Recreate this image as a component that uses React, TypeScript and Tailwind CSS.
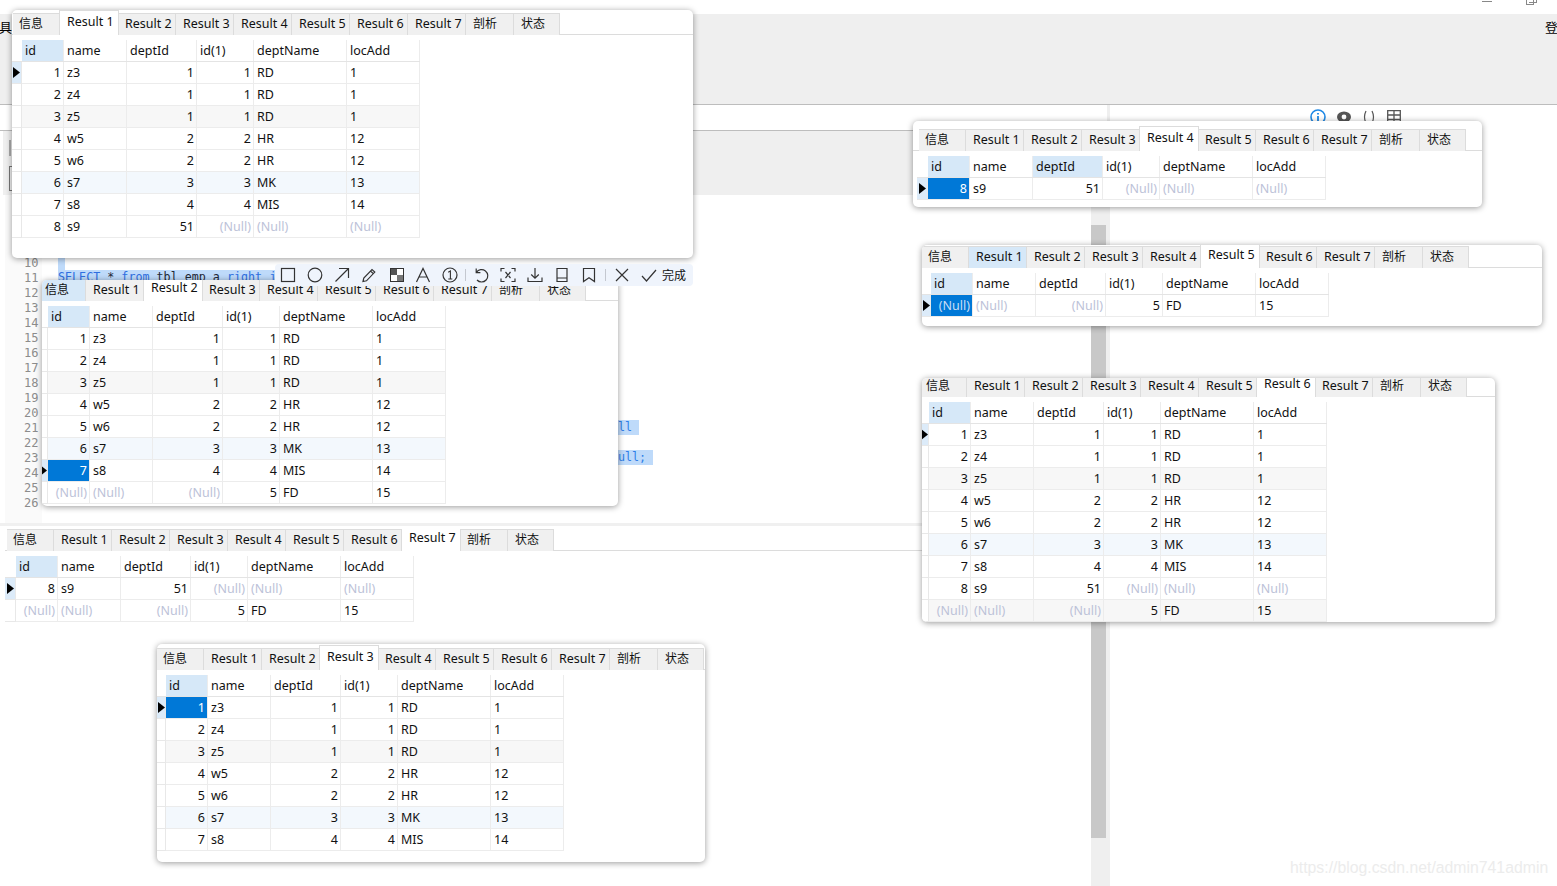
import React from 'react'

type Row = string[]

const NULL = '(Null)'
const base: Row[] = [
  ['1', 'z3', '1', '1', 'RD', '1'],
  ['2', 'z4', '1', '1', 'RD', '1'],
  ['3', 'z5', '1', '1', 'RD', '1'],
  ['4', 'w5', '2', '2', 'HR', '12'],
  ['5', 'w6', '2', '2', 'HR', '12'],
  ['6', 's7', '3', '3', 'MK', '13'],
  ['7', 's8', '4', '4', 'MIS', '14'],
]
const s9: Row = ['8', 's9', '51', NULL, NULL, NULL]
const fd: Row = [NULL, NULL, NULL, '5', 'FD', '15']

const COLS = ['id', 'name', 'deptId', 'id(1)', 'deptName', 'locAdd']
const COL_W = ['w-[42px]', 'w-[63px]', 'w-[70px]', 'w-[57px]', 'w-[93px]', 'w-[73px]']
const RIGHT = [true, false, true, true, false, false]
const TABS = ['Result 1', 'Result 2', 'Result 3', 'Result 4', 'Result 5', 'Result 6', 'Result 7']

interface PanelProps {
  box: string
  tabPad: string
  gridPad: string
  indW: string
  active: number
  rows: Row[]
  selected?: number
  markerRow?: number
  hoverTab?: string
  hoverHead?: number
  flat?: boolean
}

const Arrow = () => (
  <svg width="7" height="11" viewBox="0 0 7 11">
    <polygon points="0,0 7,5.5 0,11" fill="#000" />
  </svg>
)

const Tab = ({ label, w, active, hover, cjk, first }: { label: string; w: string; active?: boolean; hover?: boolean; cjk?: boolean; first?: boolean }) => {
  if (active) {
    return (
      <div className="relative z-10 -mx-px -mt-[3px] h-[25px] w-[60px] shrink-0 border-x border-t border-[#dcdcdc] bg-white pl-[7px] leading-[21px] text-[#111]">
        {label}
      </div>
    )
  }
  return (
    <div className={`${w} h-[22px] shrink-0 border-t border-r border-[#dcdcdc] leading-[20px] ${first ? 'pl-[6px]' : 'pl-[7px]'} ${cjk ? 'text-[12px]' : ''} ${hover ? 'bg-[#d6e8f8]' : 'bg-[#f0f0f0]'}`}>
      {label}
    </div>
  )
}

const Panel = ({ box, tabPad, gridPad, indW, active, rows, selected, markerRow = 0, hoverTab, hoverHead, flat }: PanelProps) => (
  <div className={`${box} absolute z-10 overflow-hidden bg-white text-[12.5px] text-[#111] ${flat ? '' : 'rounded-[5px] shadow-[0_1px_6px_rgba(0,0,0,0.4)]'}`}>
    <div className={`${tabPad} flex h-[22px] border-b border-[#dcdcdc]`}>
      <Tab label="信息" w="w-[47px]" hover={hoverTab === '信息'} cjk first />
      {TABS.map((t, i) => (
        <Tab key={t} label={t} w="w-[58px]" active={i === active} hover={hoverTab === t} />
      ))}
      <Tab label="剖析" w="w-[48px]" cjk />
      <Tab label="状态" w="w-[46px]" cjk />
    </div>
    <div className={`${gridPad} mt-[5px] w-fit`}>
      <div className="flex h-[22px] border-b border-[#e4e4e4] leading-[22px]">
        <div className={`${indW} shrink-0`} />
        {COLS.map((c, i) => (
          <div key={c} className={`${COL_W[i]} shrink-0 border-r border-[#ececec] pl-[3px] ${i === 0 || i === hoverHead ? 'bg-[#d6e8f8]' : ''}`}>{c}</div>
        ))}
      </div>
      {rows.map((r, ri) => {
        const nth = ri + 1
        const tint = nth % 6 === 0 ? 'bg-[#f3f8fd]' : nth % 3 === 0 ? 'bg-[#f7f7f7]' : 'bg-white'
        return (
          <div key={ri} className="flex h-[22px] leading-[21px]">
            <div className={`${indW} flex shrink-0 items-center justify-center border-r border-b border-[#e8e8e8] ${ri === markerRow ? 'bg-[#dcebf9]' : 'bg-white'}`}>
              {ri === markerRow && <Arrow />}
            </div>
            {r.map((v, i) => {
              const sel = selected === ri && i === 0
              const isNull = v === NULL
              return (
                <div
                  key={i}
                  className={`${COL_W[i]} shrink-0 border-r border-b border-[#ececec] ${RIGHT[i] ? 'pr-[2px] text-right' : 'pl-[3px]'} ${sel ? 'bg-[#0078d7]' : tint} ${sel ? (isNull ? 'text-[#c9def5]' : 'text-white') : isNull ? 'text-[#bcc2d8]' : ''}`}
                >
                  {v}
                </div>
              )
            })}
          </div>
        )
      })}
    </div>
  </div>
)

const Tool = ({ w, children }: { w: string; children: React.ReactNode }) => (
  <svg className={`${w} h-[16px] shrink-0`} viewBox="0 0 16 16" fill="none" stroke="#333" strokeWidth="1.2">
    {children}
  </svg>
)

const Toolbar = () => (
  <div className="absolute left-[275px] top-[264px] z-20 flex h-[22px] w-[418px] items-center rounded-[4px] bg-[#eff4fc] pl-[5px] text-[13px] text-[#111] [font-family:'Noto_Sans_CJK_SC',sans-serif]">
    <div className="flex items-center gap-[11px]">
      <Tool w="w-[16px]"><rect x="1.5" y="1.5" width="13" height="13" /></Tool>
      <Tool w="w-[16px]"><circle cx="8" cy="8" r="6.8" /></Tool>
      <Tool w="w-[16px]"><path d="M1.5 14.5 14.5 1.5M5 1.5h9.5V11" /></Tool>
      <Tool w="w-[16px]"><path d="M2 14.5 2.8 11 11 2.5l2.8 2.6L5.5 13.8ZM9.5 4l2.8 2.6" /></Tool>
      <svg className="ml-[2px] h-[14px] w-[14px] shrink-0" viewBox="0 0 14 14">
        <rect x="0.5" y="0.5" width="13" height="13" fill="#fff" stroke="#333" />
        <rect x="1" y="1" width="6" height="6" fill="#555" />
        <rect x="7" y="7" width="6" height="6" fill="#777" />
      </svg>
      <Tool w="w-[16px]"><path d="M1.5 15 8 1.5 14.5 15M4 10h8" /></Tool>
      <svg className="h-[16px] w-[16px] shrink-0" viewBox="0 0 16 16">
        <circle cx="8" cy="8" r="7" fill="none" stroke="#333" strokeWidth="1.2" />
        <path d="M6.2 5.2 8.4 4v8M6.3 12h4" fill="none" stroke="#333" strokeWidth="1.1" />
      </svg>
    </div>
    <div className="ml-[7px] h-[12px] w-px bg-[#c4c8d0]" />
    <div className="ml-[7px] flex items-center gap-[11px]">
      <Tool w="w-[16px]"><path d="M3.2 1.5v4.2h4.2M3.4 5.4A6.2 6.2 0 1 1 4 13" /></Tool>
      <Tool w="w-[16px]"><path d="M1 4.5V1.5h3.5M11.5 1.5H15v3M15 11.5v3h-3.5M4.5 14.5H1v-3M5.5 5l5 6M10.5 5l-5 6" /></Tool>
      <Tool w="w-[16px]"><path d="M8 1v10M4.2 7.5 8 11.2l3.8-3.7M1 10.5v4h14v-4" /></Tool>
      <Tool w="w-[16px]"><path d="M3 1.5h10v13H3ZM3 11h10" /></Tool>
      <Tool w="w-[16px]"><path d="M2.5 1.5h11v13L8 10.8l-5.5 3.7Z" /></Tool>
    </div>
    <div className="ml-[8px] h-[12px] w-px bg-[#c4c8d0]" />
    <div className="ml-[8px] flex items-center gap-[11px]">
      <Tool w="w-[16px]"><path d="M2 2l12 12M14 2 2 14" /></Tool>
      <Tool w="w-[16px]"><path d="M1 9l4.5 5L15 3" /></Tool>
    </div>
    <span className="ml-[5px] text-[12px]">完成</span>
  </div>
)

const LINE_NOS = ['10', '11', '12', '13', '14', '15', '16', '17', '18', '19', '20', '21', '22', '23', '24', '25', '26']

export default function App() {
  return (
    <div className="relative h-[886px] w-[1557px] overflow-hidden bg-white [font-family:'Noto_Sans','Noto_Sans_CJK_SC',sans-serif]">
      {/* window behind the snippets */}
      <div className="relative h-[14px] bg-white">
        <div className="absolute left-[1482px] top-[1px] h-px w-[10px] bg-[#888]" />
        <div className="absolute left-[1526px] top-0 h-[5px] w-[8px] border-x border-b border-[#888]" />
        <div className="absolute left-[1529px] top-0 h-[3px] w-[8px] border-r border-b border-[#888]" />
      </div>
      <div className="flex h-[91px] items-start justify-between overflow-hidden border-b border-[#bdbdbd] bg-[#efefef] pt-[3px] text-[13px] text-black [font-family:'Noto_Sans_CJK_SC',sans-serif]">
        <span className="-ml-[1px]">具</span>
        <span className="-mr-[1px]">登</span>
      </div>

      <div className="flex h-[781px]">
        <div className="flex h-full w-[1107px] shrink-0 flex-col">
          <div className="h-[26px] border-b border-[#bdbdbd]" />
          <div className="relative ml-[3px] h-[64px] shrink-0 bg-[#efefef]">
            <div className="absolute left-[6px] top-[9px] h-[16px] w-[2px] bg-[#aaa]" />
            <div className="absolute left-[6px] top-[35px] h-[25px] w-[4px] border border-[#777]" />
          </div>
          <div className="flex grow">
            <div className="w-[1091px] shrink-0">
              <div className="relative h-[328px]">
                <div className="absolute left-[5px] top-0 h-full w-[37px] bg-[#fafafa]" />
                <div className="absolute left-[24px] top-[61px] flex flex-col text-[12px] leading-[15px] text-[#8c8c8c] [font-family:'DejaVu_Sans_Mono',monospace]">
                  {LINE_NOS.map((n) => (
                    <span key={n}>{n}</span>
                  ))}
                </div>
                <div className="absolute left-[58px] top-[63px] h-[12px] w-[7px] bg-[#bedafa]" />
                <div className="absolute left-[58px] top-[75px] h-[15px] w-[222px] bg-[#bedafa] text-[11.7px] leading-[15px] whitespace-pre text-[#1f2937] [font-family:'DejaVu_Sans_Mono',monospace]">
                  <span className="text-[#2f6fe0]">SELECT</span> * <span className="text-[#2f6fe0]">from</span> tbl_emp a <span className="text-[#2f6fe0]">right join</span>
                </div>
                <div className="absolute left-[618px] top-[225px] h-[15px] w-[21px] bg-[#bedafa] text-[11.7px] leading-[15px] text-[#2f7fe8] [font-family:'DejaVu_Sans_Mono',monospace]">ll</div>
                <div className="absolute left-[618px] top-[255px] h-[15px] w-[35px] bg-[#bedafa] text-[11.7px] leading-[15px] text-[#2f7fe8] [font-family:'DejaVu_Sans_Mono',monospace]">ull;</div>
              </div>
              <div className="h-[3px] bg-[#f0f0f0]" />
            </div>
            <div className="relative h-full w-[16px] shrink-0 bg-[#efefef]">
              <div className="absolute left-0 top-[30px] h-[613px] w-[15px] bg-[#c8c8c8]" />
            </div>
          </div>
        </div>
        <div className="h-full w-[3px] shrink-0 bg-[#efefef]" />
        <div className="relative grow">
          <div className="absolute left-[200px] top-[4px] flex items-center gap-[11px]">
            <svg className="h-[16px] w-[16px]" viewBox="0 0 16 16">
              <circle cx="8" cy="8" r="7" fill="none" stroke="#1e88e5" strokeWidth="1.6" />
              <path d="M8 7v5M8 4v1.6" stroke="#1e88e5" strokeWidth="1.8" />
            </svg>
            <svg className="h-[14px] w-[14px]" viewBox="0 0 14 14">
              <ellipse cx="7" cy="7" rx="7" ry="5.5" fill="#555" />
              <circle cx="7" cy="7" r="2.4" fill="#fff" />
            </svg>
            <svg className="h-[14px] w-[14px]" viewBox="0 0 14 14" fill="none" stroke="#555" strokeWidth="1.2">
              <path d="M4 1Q1 7 4 13M10 1q3 6 0 12" />
            </svg>
            <svg className="h-[14px] w-[14px]" viewBox="0 0 14 14" fill="none" stroke="#555" strokeWidth="1.3">
              <path d="M.7.7h12.6v12.6H.7ZM7 .7v12.6M.7 5h12.6M.7 9.5h12.6" />
            </svg>
          </div>
        </div>
      </div>

      {/* the pasted result grids */}
      <Panel box="left-[12px] top-[10px] h-[248px] w-[681px] pt-[3px]" tabPad="pl-px" gridPad="pl-0" indW="w-[10px]" active={0} rows={[...base, s9]} />
      <Panel box="left-[42px] top-[280px] h-[226px] w-[576px]" tabPad="-ml-[3px] -mt-px" gridPad="pl-0" indW="w-[6px]" active={1} rows={[...base, fd]} selected={6} markerRow={6} hoverTab="信息" />
      <Panel box="left-[5px] top-[529px] h-[105px] w-[1086px]" tabPad="pl-[2px]" gridPad="pl-0" indW="w-[11px]" active={6} rows={[s9, fd]} flat />
      <Panel box="left-[157px] top-[644px] h-[218px] w-[548px] pt-[4px]" tabPad="pl-0" gridPad="pl-0" indW="w-[9px]" active={2} rows={base} selected={0} />
      <Panel box="left-[913px] top-[121px] h-[86px] w-[569px] pt-[8px]" tabPad="pl-[6px]" gridPad="pl-[4px]" indW="w-[11px]" active={3} rows={[s9]} selected={0} hoverHead={2} />
      <Panel box="left-[922px] top-[245px] h-[81px] w-[620px] pt-px" tabPad="pl-0" gridPad="pl-0" indW="w-[9px]" active={4} rows={[fd]} selected={0} hoverTab="Result 1" />
      <Panel box="left-[922px] top-[378px] h-[244px] w-[573px]" tabPad="-ml-[2px] -mt-[3px]" gridPad="pl-0" indW="w-[7px]" active={5} rows={[...base, s9, fd]} />
      <Toolbar />

      <div className="absolute left-[1290px] top-[858px] text-[15.8px] leading-[20px] text-[#ececec] [font-family:'Liberation_Sans',sans-serif]">
        https://blog.csdn.net/admin741admin
      </div>
    </div>
  )
}
